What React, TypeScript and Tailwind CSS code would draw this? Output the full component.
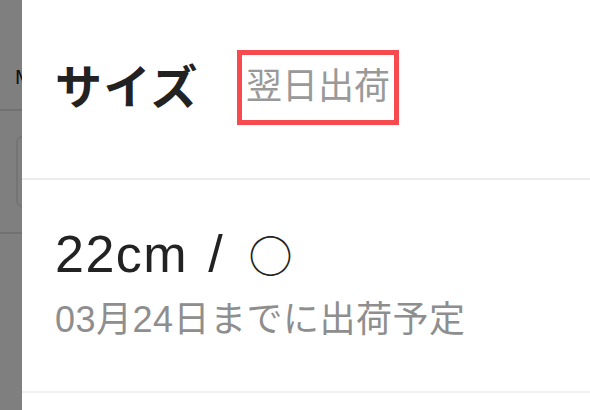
const jp = "font-['Liberation_Sans','Noto_Sans_CJK_JP',sans-serif]";

function BehindPage() {
  // the page under the drawer, dimmed by the overlay
  return (
    <div className="relative w-[22px] shrink-0 overflow-hidden bg-[#7f7f7f]">
      <div className={`absolute left-[15px] top-[64px] text-[21px] leading-[26px] text-[#111] ${jp}`}>M</div>
      <div className="absolute left-0 top-[109px] h-[2px] w-full bg-[#717171]" />
      <div className="absolute left-[16px] top-[136px] h-[71px] w-[40px] rounded-[6px] border-2 border-[#747474]" />
      <div className="absolute left-0 top-[232px] h-[2px] w-full bg-[#717171]" />
    </div>
  );
}

export default function App() {
  return (
    <div className={`flex h-[410px] w-[590px] overflow-hidden bg-white ${jp}`}>
      <BehindPage />
      <div className="flex flex-1 flex-col bg-white">
        <div className="flex h-[178px] items-center pl-[33px] pb-[4px]">
          <h2 className="text-[47px] font-bold leading-none tracking-[1.5px] text-[#222]">サイズ</h2>
          <span className="ml-[38px] flex h-[75px] items-center border-[5px] border-[#f64a4f] px-[4px] text-[36px] leading-none text-[#999]">
            翌日出荷
          </span>
        </div>
        <div className="h-[2px] bg-[#ececec]" />
        <div className="flex h-[211px] flex-col pl-[33px] pt-[46px]">
          <div className="flex items-center text-[52px] leading-[56px] text-[#222]">
            <span className="tracking-[1.5px]">22cm</span>
            <span className="ml-[20px]">/</span>
            <span className="ml-[26px] font-['Noto_Sans_CJK_JP',sans-serif] text-[44px] leading-[56px]">○</span>
          </div>
          <div className="mt-[17px] text-[36px] leading-[42px] tracking-[0.5px] text-[#8e8e8e]">03月24日までに出荷予定</div>
        </div>
        <div className="h-[2px] bg-[#efefef]" />
        <div className="flex-1" />
      </div>
    </div>
  );
}
